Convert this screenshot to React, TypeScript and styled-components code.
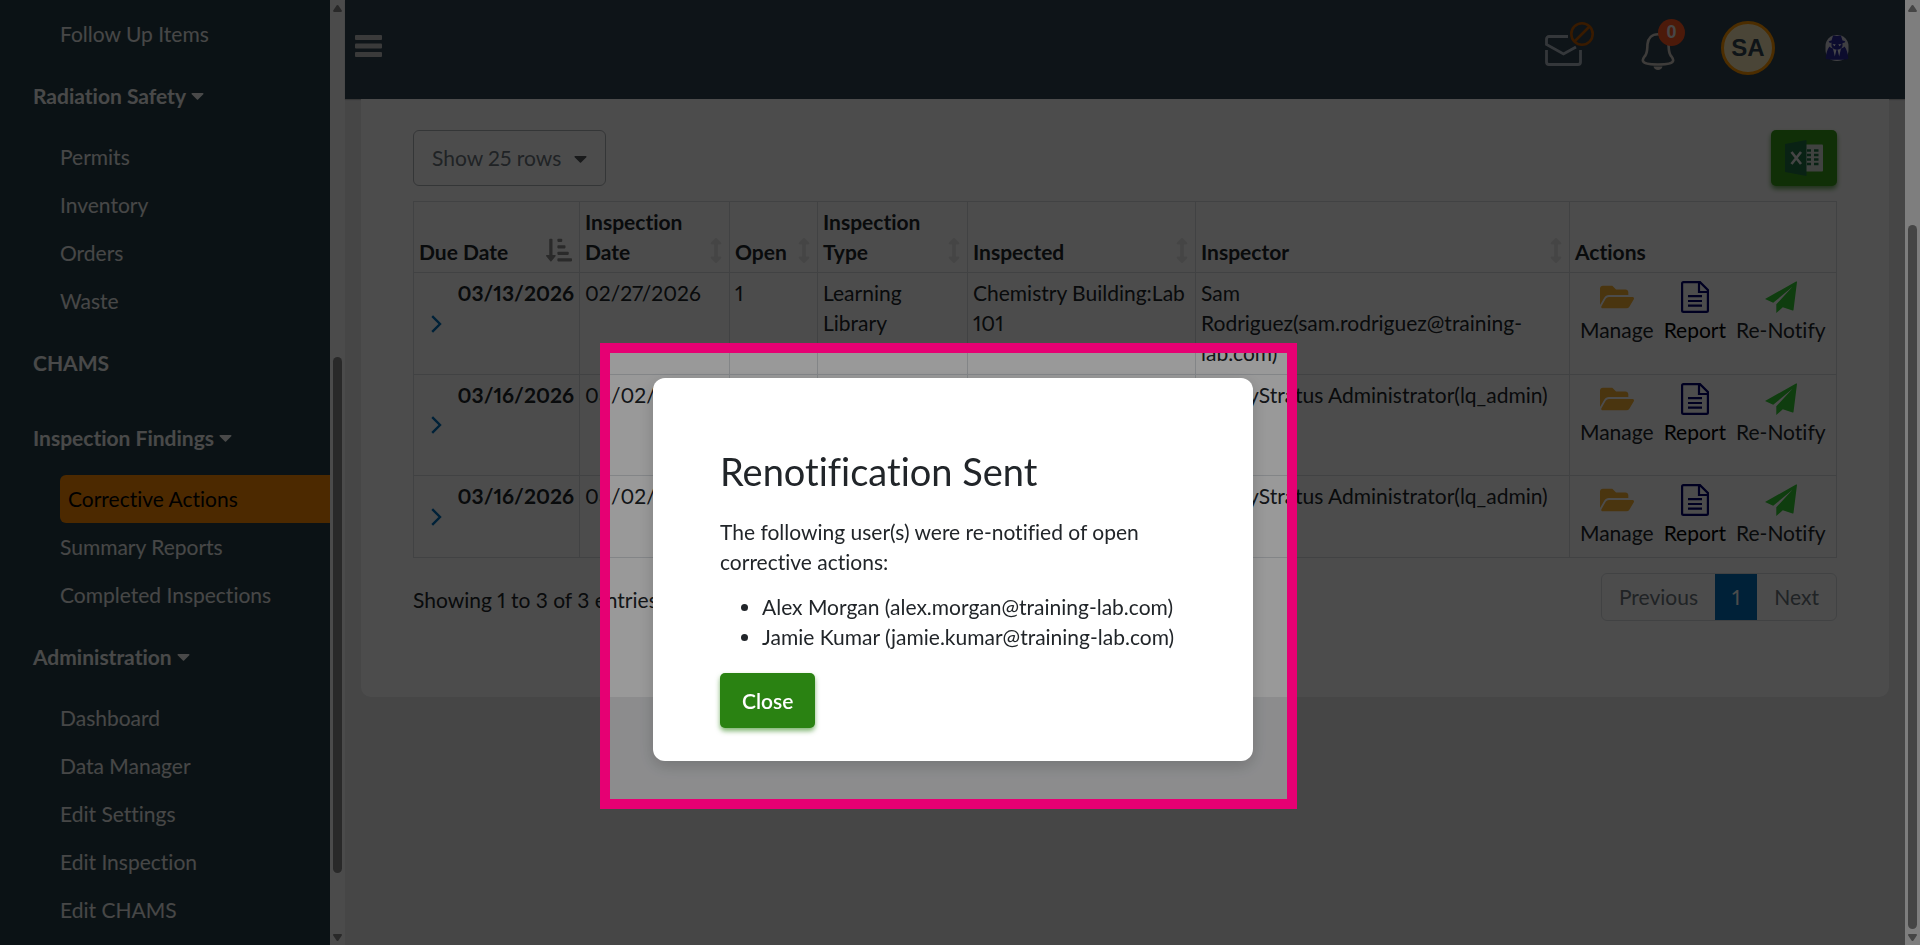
import React from "react";
import styled, { createGlobalStyle } from "styled-components";
import { FaArrowsAltV, FaCaretDown, FaFolderOpen, FaSortAmountDownAlt } from "react-icons/fa";

const GlobalStyle = createGlobalStyle`
  * { box-sizing: border-box; }
  body {
    margin: 0;
    overflow: hidden;
    background: #e9eaec;
    color: #212529;
    font: 21px/30px Lato, "Open Sans", sans-serif;
    font-variant-ligatures: none;
    font-variant-numeric: proportional-nums;
  }
  button, select { font: inherit; }
`;

const Page = styled.div`
  display: flex;
  height: 100vh;
`;

/* Sidebar */

const Sidebar = styled.nav`
  flex: 0 0 330px;
  padding-top: 10px;
  overflow: hidden;
  background: #253f47;
`;

const NavHeading = styled.a`
  display: flex;
  align-items: center;
  gap: 5px;
  height: 75px;
  padding-left: 33px;
  color: #f4f4f4;
  font-weight: 700;
  text-decoration: none;
`;

const HeadingCaret = styled(FaCaretDown)`
  width: 13px;
`;

const NavList = styled.ul`
  margin: 0;
  padding: 0 0 0 60px;
  list-style: none;
`;

const NavLink = styled.a<{ $active?: boolean }>`
  display: block;
  padding: 9px 0 9px ${(p) => (p.$active ? 8 : 0)}px;
  border-radius: 6px 0 0 6px;
  background: ${(p) => (p.$active ? "#ff8a00" : "transparent")};
  color: ${(p) => (p.$active ? "#000" : "#ededed")};
  text-decoration: none;
`;

/* Scroll tracks */

const Track = styled.div`
  display: flex;
  flex: 0 0 15px;
  flex-direction: column;
  align-items: center;
  padding: 5px 0 4px;
  background: #fcfcfc;
`;

const Arrow = styled.svg`
  flex: none;
  width: 9px;
  height: 7px;
  fill: #8b8b8b;
`;

const Rail = styled.div<{ $before: number; $after: number }>`
  display: flex;
  flex: 1;
  padding: ${(p) => p.$before}vh 0 ${(p) => p.$after}vh;
`;

const Thumb = styled.div`
  width: 9px;
  border-radius: 5px;
  background: #8b8b8b;
`;

function ScrollTrack({ before, after }: { before: number; after: number }) {
  return (
    <Track aria-hidden="true">
      <Arrow viewBox="0 0 9 7"><path d="M4.500 0c.6 0 1 .4 1.300.9L8.800 5.500C9.200 6.200 8.800 7 8 7H1C.2 7-.2 6.200.2 5.500L3.200.9C3.500.4 3.900 0 4.500 0Z" /></Arrow>
      <Rail $before={before} $after={after}><Thumb /></Rail>
      <Arrow viewBox="0 0 9 7"><path d="M4.500 7c.6 0 1-.4 1.300-.9l3-4.600C9.200.8 8.800 0 8 0H1C.2 0-.2.8.2 1.500l3 4.600c.3.500.7.900 1.300.9Z" /></Arrow>
    </Track>
  );
}

/* Top bar */

const Main = styled.main`
  flex: 1;
  min-width: 0;
`;

const TopBar = styled.header`
  display: flex;
  align-items: center;
  justify-content: space-between;
  height: 99px;
  padding: 0 56px 0 10px;
  background: #2f4350;
  box-shadow: 0 1px 1px #bbb;
`;

const IconButton = styled.button`
  display: flex;
  padding: 0;
  border: 0;
  background: none;
`;

const MenuButton = styled(IconButton)`
  padding-bottom: 8px;
`;

const Tools = styled.div`
  display: flex;
  align-items: center;
  padding-bottom: 3px;
`;

const MailButton = styled(IconButton)`
  margin-right: 46px;
  padding-bottom: 4px;
`;

const BellButton = styled(IconButton)`
  position: relative;
  margin-right: 34px;
  padding-bottom: 4px;
`;

const Badge = styled.span`
  position: absolute;
  top: 0;
  left: 18px;
  width: 27px;
  border-radius: 50%;
  background: #ff5722;
  color: #eee;
  font: 700 18px/27px "Liberation Sans", Arial, sans-serif;
  text-align: center;
`;

const Avatar = styled.button`
  width: 54px;
  height: 54px;
  margin-right: 50px;
  padding: 0;
  border: 3px solid #ff9800;
  border-radius: 50%;
  background: #f8e8ba;
  color: #2f4350;
  font: 700 24px/48px "Liberation Sans", Arial, sans-serif;
`;

/* Card and table */

const Card = styled.section`
  margin: 0 16px;
  padding: 31px 52px 76px;
  border-radius: 0 0 10px 10px;
  background: #fff;
`;

const Controls = styled.div`
  display: flex;
  justify-content: space-between;
  margin-bottom: 15px;
`;

const RowsBox = styled.div`
  position: relative;
  color: #55585c;
`;

const RowsSelect = styled.select`
  width: 193px;
  height: 56px;
  padding: 0 18px;
  appearance: none;
  border: 1px solid #b0b4b8;
  border-radius: 6px;
  background: transparent;
  color: #6c757d;
`;

const SelectCaret = styled(FaCaretDown)`
  position: absolute;
  top: 18px;
  right: 15px;
  pointer-events: none;
`;

const ExcelButton = styled.button`
  display: flex;
  align-items: center;
  justify-content: center;
  width: 66px;
  height: 56px;
  padding: 0;
  border: 0;
  border-radius: 5px;
  background: #389f1a;
  box-shadow: 0 3px 5px rgba(42, 130, 18, 0.7);
`;

const Table = styled.table`
  width: 100%;
  border-collapse: collapse;
  table-layout: fixed;
`;

const Col = styled.col<{ $width?: number }>`
  width: ${(p) => (p.$width ? `${p.$width}px` : "auto")};
`;

const HeadCell = styled.th`
  padding: 5px;
  border: 1px solid #dadee2;
  font-weight: 700;
  text-align: left;
  vertical-align: bottom;
`;

const HeadContent = styled.div`
  display: flex;
  align-items: flex-end;
  justify-content: space-between;
`;

const SortIcon = styled(FaArrowsAltV)`
  flex: none;
  width: 16px;
  height: 25px;
  margin-bottom: 4px;
  color: #e8e8e8;
`;

const SortedIcon = styled(FaSortAmountDownAlt)`
  flex: none;
  width: 26px;
  height: 26px;
  margin: 0 2px 4px 0;
  color: #8c8c8c;
`;

const Cell = styled.td<{ $height?: number }>`
  height: ${(p) => (p.$height ? `${p.$height}px` : "auto")};
  padding: 5px;
  border: 1px solid #dadee2;
  vertical-align: top;
`;

const DueCell = styled.div`
  display: flex;
  justify-content: space-between;
  height: 100%;
  padding-left: 12px;
  font-weight: 700;
`;

const Expand = styled(IconButton)`
  align-self: center;
`;

const Actions = styled.div`
  display: flex;
  gap: 10px;
  padding: 3px 0 0 5px;
`;

const Action = styled.button<{ $strong?: boolean }>`
  display: flex;
  flex-direction: column;
  align-items: center;
  gap: 2px;
  padding: 0;
  border: 0;
  background: none;
  color: ${(p) => (p.$strong ? "#000" : "#212529")};
`;

const FolderIcon = styled(FaFolderOpen)`
  width: 34px;
  height: 32px;
  color: #f8b133;
`;

const TableFooter = styled.div`
  display: flex;
  justify-content: space-between;
  margin-top: 15px;
`;

const Summary = styled.div`
  padding-top: 12px;
`;

const Pager = styled.div`
  display: flex;
  overflow: hidden;
  border: 1px solid #dadee2;
  border-radius: 6px;
`;

const PageButton = styled.button<{ $active?: boolean }>`
  padding: 8px 17px;
  border: 0;
  background: ${(p) => (p.$active ? "#0070bb" : "transparent")};
  color: ${(p) => (p.$active ? "#fff" : "#6c757d")};
`;

/* Dialog */

const Backdrop = styled.div`
  position: fixed;
  inset: 0 15px 0 0;
  background: rgba(0, 0, 0, 0.4);
`;

const Overlay = styled.div`
  position: fixed;
  inset: 0;
  display: flex;
  align-items: flex-start;
  justify-content: center;
  padding: calc(40vh - 35px) 23px 0 0;
  overflow: hidden;
`;

const Spotlight = styled.div`
  padding: 25px 34px 38px 43px;
  border: 10px solid #e60073;
  box-shadow: 0 0 0 200vmax rgba(0, 0, 0, 0.5);
`;

const Dialog = styled.div`
  width: 600px;
  padding: 69px 67px 33px;
  border-radius: 12px;
  background: #fff;
  box-shadow: 0 5px 16px rgba(0, 0, 0, 0.18);
`;

const Title = styled.h2`
  margin: 0 0 22px;
  font-size: 38px;
  font-weight: 400;
  line-height: 48px;
`;

const Message = styled.p`
  margin: 0 0 15px;
`;

const Recipients = styled.ul`
  margin: 0 0 21px;
  padding-left: 42px;
`;

const CloseButton = styled.button`
  height: 55px;
  padding: 0 22px;
  border: 0;
  border-radius: 5px;
  background: #2a8212;
  box-shadow: 0 3px 5px rgba(42, 130, 18, 0.6);
  color: #fff;
  font-weight: 600;
`;

/* Drawings */

const MenuIcon = () => (
  <svg width="27" height="22" viewBox="0 0 27 22" fill="#c4c4c4">
    <rect width="27" height="5" rx="1" />
    <rect y="8.500" width="27" height="5" rx="1" />
    <rect y="17" width="27" height="5" rx="1" />
  </svg>
);

const MailIcon = () => (
  <svg width="50" height="54" viewBox="0 0 50 54" fill="none">
    <path d="M24 17.500H5a2.500 2.500 0 0 0-2.500 2.500v5.500L19.500 35 32 28M2.500 31v12A2.500 2.500 0 0 0 5 45.500h29a2.500 2.500 0 0 0 2.500-2.500V31" stroke="#b0b9c2" strokeWidth="2.800" />
    <circle cx="38" cy="15" r="10.700" stroke="#c05a00" strokeWidth="2.600" />
    <path d="M30.500 22.500l15-15" stroke="#c05a00" strokeWidth="2.600" />
  </svg>
);

const BellIcon = () => (
  <svg width="47" height="54" viewBox="0 0 47 54" fill="none">
    <path d="M18 15.200c-6 0-10 4-10.500 10-.3 4 0 8-2 11-1.500 2.200-2.700 3.300-2.700 5 0 3 7 4.300 15.200 4.300s15.200-1.300 15.200-4.300c0-1.700-1.200-2.800-2.700-5-2-3-1.700-7-2-11-.5-6-4.500-10-10.500-10Z" stroke="#cfc9c2" strokeWidth="2.600" />
    <path d="M13.500 47.500h9c-.5 2-2.200 3.500-4.500 3.500S14 49.500 13.500 47.500Z" fill="#cfc9c2" />
  </svg>
);

const SpyIcon = () => (
  <svg width="24" height="26" viewBox="0 0 24 26">
    <rect x="0.500" width="23" height="26" rx="11" fill="#d4d4de" />
    <path d="M6.500 5.500 8 .8c1.300-.8 2.600.3 4 .3s2.700-1.100 4-.3l1.500 4.700c1.800.3 2.800.8 2.800 1.300 0 1-3.700 1.500-8.300 1.500s-8.300-.5-8.300-1.500c0-.5 1-1 2.800-1.300Z" fill="#28289a" />
    <path d="M6.500 8h11v3c-.5 2-2.500 3.500-5.500 3.500S7 13 6.500 11Z" fill="#28289a" />
    <path d="M7.500 9.300h3.200L9.500 11.200ZM13.300 9.300h3.200l-2 1.900Z" fill="#fff" />
    <path d="M4.500 11.500c1 1.500 3.500 2.500 7.500 2.500s6.500-1 7.500-2.500c2.200 2.500 3.500 7 3.800 12.500-3 1-19.600 1-22.600 0 .3-5.500 1.600-10 3.800-12.500Z" fill="#28289a" />
    <path d="M8 13.500c1 .8 2.200 1 3.500 1L9.800 21.500Zm8 0c-1 .8-2.200 1-3.500 1l1.700 7Z" fill="#e8e8f4" />
  </svg>
);

const ExcelIcon = () => (
  <svg width="38" height="36" viewBox="0 0 38 36">
    <path d="M20 4.500h17a1 1 0 0 1 1 1v25a1 1 0 0 1-1 1H20Z" fill="#d8dcd8" />
    <path d="M22 10.500h4M22 15h4M22 19.500h4M22 24h4M29 10.500h4.500M29 15h4.500M29 19.500h4.500M29 24h4.500" stroke="#1f7244" strokeWidth="2.400" />
    <path d="M0 4 21.500 0v36L0 32Z" fill="#1f7244" />
    <path d="M6.500 12l9.500 12M16 12 6.500 24" stroke="#e8e8e8" strokeWidth="2.600" />
  </svg>
);

const ReportIcon = () => (
  <svg width="28" height="32" viewBox="0 0 28 32" fill="none" stroke="#00006e" strokeWidth="2.200">
    <path d="M1.100 2.500c0-.8.600-1.400 1.400-1.400H19L26.900 9v20.500c0 .8-.6 1.400-1.400 1.400h-23c-.8 0-1.400-.6-1.400-1.400ZM18 1.500V11h8.800M7 15.200h14M7 20h14M7 24.700h14" />
  </svg>
);

const PlaneIcon = () => (
  <svg width="32" height="32" viewBox="0 0 32 32" fill="#32cd32">
    <path d="M31.500.3 0 18l8.200 3.800L27.500 5.800 11.300 23.300V32l6.500-5.800 9.700 3.300c.5.100.9-.2 1-.6L32 1Z" />
  </svg>
);

const ChevronIcon = () => (
  <svg width="11" height="18" viewBox="0 0 11 18" fill="none" stroke="#0070bb" strokeWidth="2.400">
    <path d="M1.200 1.200 9 9l-7.800 7.800" />
  </svg>
);

/* Data */

const sections = [
  { title: "Radiation Safety", items: ["Permits", "Inventory", "Orders", "Waste"] },
  { title: "CHAMS", items: [] },
  { title: "Inspection Findings", items: ["Corrective Actions", "Summary Reports", "Completed Inspections"] },
  { title: "Administration", items: ["Dashboard", "Data Manager", "Edit Settings", "Edit Inspection", "Edit CHAMS"] },
];

const columns = [
  { label: "Due Date", width: 166, sorted: true },
  { label: "Inspection Date", width: 150 },
  { label: "Open", width: 88 },
  { label: "Inspection Type", width: 150 },
  { label: "Inspected", width: 228 },
  { label: "Inspector" },
  { label: "Actions", width: 267, fixed: true },
];

const rows = [
  { height: 102, due: "03/13/2026", cells: ["02/27/2026", "1", "Learning Library", "Chemistry Building:Lab 101", "Sam Rodriguez(sam.rodriguez@training-lab.com)"] },
  { height: 101, due: "03/16/2026", cells: ["03/02/2026", "", "", "", "SafetyStratus Administrator(lq_admin)"] },
  { height: 82, due: "03/16/2026", cells: ["03/02/2026", "", "", "", "SafetyStratus Administrator(lq_admin)"] },
];

export default function App() {
  return (
    <>
      <GlobalStyle />
      <Page>
        <Sidebar>
          <NavList>
            <li><NavLink href="#">Follow Up Items</NavLink></li>
          </NavList>
          {sections.map((section) => (
            <React.Fragment key={section.title}>
              <NavHeading href="#">
                {section.title}
                {section.items.length > 0 && <HeadingCaret />}
              </NavHeading>
              <NavList>
                {section.items.map((item) => (
                  <li key={item}>
                    <NavLink href="#" $active={item === "Corrective Actions"}>{item}</NavLink>
                  </li>
                ))}
              </NavList>
            </React.Fragment>
          ))}
        </Sidebar>
        <ScrollTrack before={36.5} after={6.5} />

        <Main>
          <TopBar>
            <MenuButton aria-label="Menu"><MenuIcon /></MenuButton>
            <Tools>
              <MailButton aria-label="Messages"><MailIcon /></MailButton>
              <BellButton aria-label="Notifications"><BellIcon /><Badge>0</Badge></BellButton>
              <Avatar>SA</Avatar>
              <IconButton aria-label="Impersonate"><SpyIcon /></IconButton>
            </Tools>
          </TopBar>

          <Card>
            <Controls>
              <RowsBox>
                <RowsSelect aria-label="Rows per page"><option>Show 25 rows</option></RowsSelect>
                <SelectCaret />
              </RowsBox>
              <ExcelButton aria-label="Export to Excel"><ExcelIcon /></ExcelButton>
            </Controls>

            <Table>
              <colgroup>
                {columns.map((c) => <Col key={c.label} $width={c.width} />)}
              </colgroup>
              <thead>
                <tr>
                  {columns.map((c) => (
                    <HeadCell key={c.label}>
                      <HeadContent>
                        {c.label}
                        {c.sorted ? <SortedIcon /> : !c.fixed && <SortIcon />}
                      </HeadContent>
                    </HeadCell>
                  ))}
                </tr>
              </thead>
              <tbody>
                {rows.map((row, i) => (
                  <tr key={i}>
                    <Cell $height={row.height}>
                      <DueCell>
                        <Expand aria-label="Expand row"><ChevronIcon /></Expand>
                        {row.due}
                      </DueCell>
                    </Cell>
                    {row.cells.map((text, j) => <Cell key={j}>{text}</Cell>)}
                    <Cell>
                      <Actions>
                        <Action><FolderIcon />Manage</Action>
                        <Action $strong><ReportIcon />Report</Action>
                        <Action><PlaneIcon />Re-Notify</Action>
                      </Actions>
                    </Cell>
                  </tr>
                ))}
              </tbody>
            </Table>

            <TableFooter>
              <Summary>Showing 1 to 3 of 3 entries</Summary>
              <Pager>
                <PageButton>Previous</PageButton>
                <PageButton $active>1</PageButton>
                <PageButton>Next</PageButton>
              </Pager>
            </TableFooter>
          </Card>
        </Main>
        <ScrollTrack before={22.5} after={0.5} />
      </Page>

      <Backdrop />
      <Overlay>
        <Spotlight>
          <Dialog role="dialog" aria-modal="true" aria-labelledby="dialog-title">
            <Title id="dialog-title">Renotification Sent</Title>
            <Message>The following user(s) were re-notified of open corrective actions:</Message>
            <Recipients>
              <li>Alex Morgan (alex.morgan@training-lab.com)</li>
              <li>Jamie Kumar (jamie.kumar@training-lab.com)</li>
            </Recipients>
            <CloseButton>Close</CloseButton>
          </Dialog>
        </Spotlight>
      </Overlay>
    </>
  );
}
